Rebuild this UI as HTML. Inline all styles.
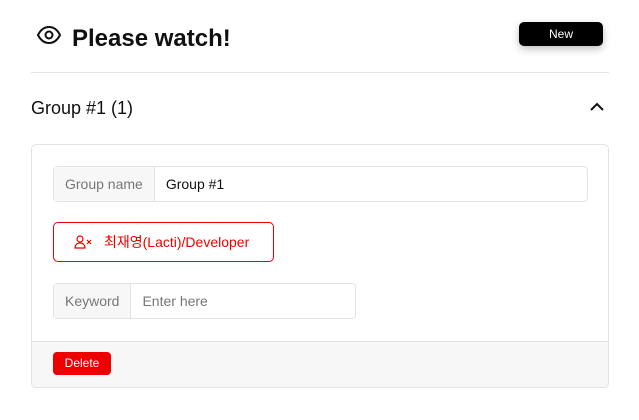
<!DOCTYPE html>
<html><head><style>
body{margin:0;width:639px;height:420px;background:#fff;font-family:"Liberation Sans","Noto Sans CJK KR",sans-serif;position:relative;overflow:hidden}
.abs{position:absolute}
.title{left:72px;top:25px;font-size:24px;font-weight:bold;color:#111}
.new{left:519px;top:22px;width:84px;height:24px;background:#000;color:#fff;border-radius:5px;font-size:12px;text-align:center;line-height:24px;box-shadow:0 3px 8px rgba(0,0,0,.25)}
.hr{left:31px;top:72px;width:578px;height:1px;background:#e6e6e6}
.grp{left:31px;top:98px;font-size:18px;color:#111}
.card{left:31px;top:144px;width:576px;height:242px;border:1px solid #e3e3e3;border-radius:5px;overflow:hidden}
.foot{left:0;top:196px;width:577px;height:46px;background:#f7f7f7;border-top:1px solid #e3e3e3}
.inp{border:1px solid #e3e3e3;border-radius:4px;height:34px;display:flex;font-size:14px}
.inp .l{background:#f7f7f7;color:#777;padding:0 11px;line-height:34px;border-right:1px solid #e3e3e3}
.inp .v{padding:0 11px;line-height:34px}
.btn{left:21px;top:77px;width:219px;height:38px;border:1px solid #e00;border-radius:5px;color:#e00;font-size:14px;line-height:38px}
.del{left:21px;top:207px;width:58px;height:23px;background:#e00;color:#fff;border-radius:4px;font-size:12px;text-align:center;line-height:23px}
</style></head><body>
<svg class="abs" style="left:36px;top:25px" width="26" height="20" viewBox="0 0 26 20"><path d="M2 10C5 4 9 2 13 2s8 2 11 8c-3 6-7 8-11 8s-8-2-11-8z" fill="none" stroke="#111" stroke-width="2"/><circle cx="13" cy="10" r="3.5" fill="none" stroke="#111" stroke-width="2"/></svg>
<div class="abs title">Please watch!</div>
<div class="abs new">New</div>
<div class="abs hr"></div>
<div class="abs grp">Group #1 (1)</div>
<svg class="abs" style="left:589px;top:101px" width="16" height="12" viewBox="0 0 16 12"><path d="M2 9l6-6 6 6" fill="none" stroke="#111" stroke-width="2"/></svg>
<div class="abs card">
<div class="abs inp" style="left:21px;top:21px;width:533px"><div class="l">Group name</div><div class="v" style="color:#111">Group #1</div></div>
<div class="abs btn"><svg class="abs" style="left:20px;top:12px" width="20" height="14" viewBox="0 0 20 14"><circle cx="6" cy="4" r="3" fill="none" stroke="#e00" stroke-width="1.2"/><path d="M1 13c0-3 2-5 5-5s5 2 5 5z" fill="none" stroke="#e00" stroke-width="1.2"/><path d="M13 5l4 4M17 5l-4 4" stroke="#e00" stroke-width="1.2"/></svg><span class="abs" style="left:50px;top:0">최재영(Lacti)/Developer</span></div>
<div class="abs inp" style="left:21px;top:138px;width:301px"><div class="l">Keyword</div><div class="v" style="color:#777">Enter here</div></div>
<div class="abs foot"></div>
<div class="abs del">Delete</div>
</div>
</body></html>
